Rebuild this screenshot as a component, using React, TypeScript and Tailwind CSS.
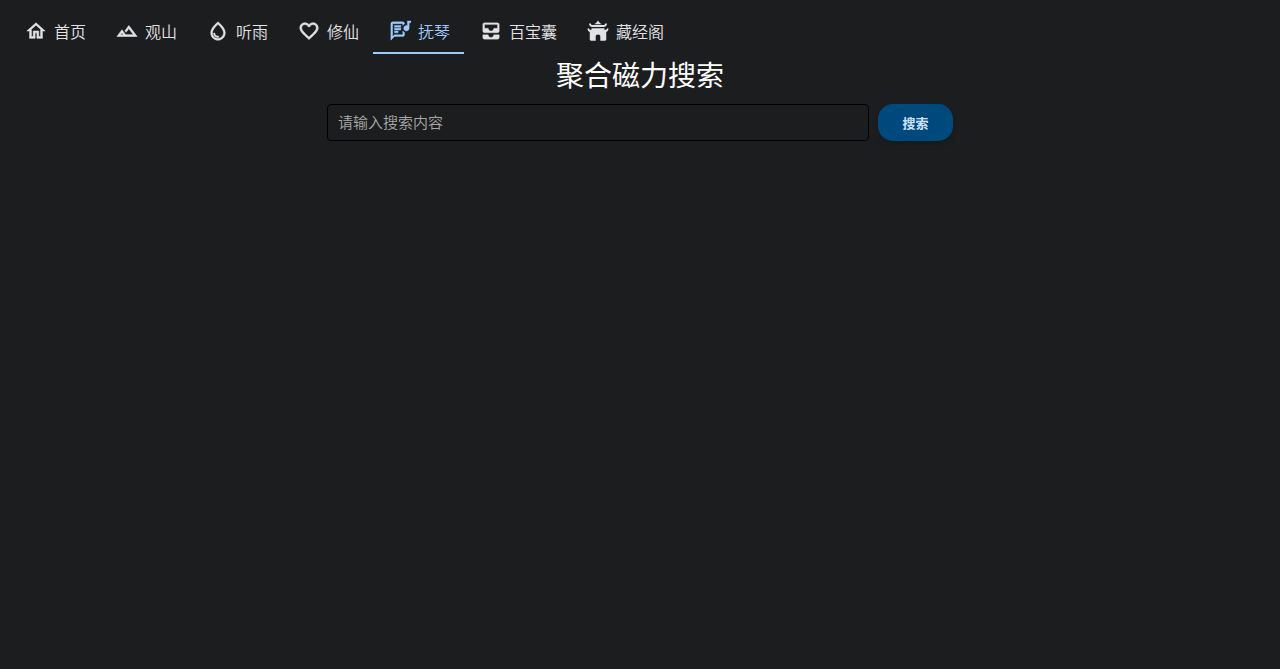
import { useState } from 'react';
import type { ReactNode } from 'react';
import { MdOutlineHome, MdOutlineWaterDrop, MdFavoriteBorder, MdOutlineLyrics, MdAllInbox } from 'react-icons/md';

type NavItem = {
  label: string;
  icon: ReactNode;
};

function MountainIcon() {
  return (
    <svg viewBox="0 0 24 24" fill="currentColor" stroke="currentColor" strokeWidth="0.6" aria-hidden="true">
      <path d="m14 6-4.22 5.63 1.25 1.67L14 9.33 19 16h-8.46l-4.01-5.37L1 18h22zM5 16l1.52-2.03L8.04 16z" />
    </svg>
  );
}

function TempleIcon() {
  return (
    <svg viewBox="0 0 24 24" fill="currentColor" aria-hidden="true">
      <path d="M12 .5c.8 1.7 2.200 3 4.200 4H7.800c2-1 3.400-2.300 4.200-4z" />
      <path d="M3.800 3.600c.3 1.300 1.100 1.900 2.500 1.900h11.400c1.400 0 2.200-.6 2.500-1.900l1.700.5c-.3 2.200-1.700 3.600-3.900 3.600H6c-2.200 0-3.600-1.400-3.900-3.600z" />
      <path d="M5 9h14v1.700h1c1 0 1.600-.6 1.900-1.700l1.600.5c-.3 2-1.200 3.100-2.500 3.600v8.100c0 .8-.5 1.300-1.300 1.300h-5.200v-4.600c0-1.100-1.100-2-2.500-2s-2.500.9-2.500 2v4.600H4.300c-.8 0-1.300-.5-1.300-1.300v-8.100C1.700 12.600.8 11.500.5 9.500L2.100 9c.3 1.100.9 1.700 1.900 1.700h1z" />
    </svg>
  );
}

const navItems: NavItem[] = [
  { label: '首页', icon: <MdOutlineHome strokeWidth={0.6} /> },
  { label: '观山', icon: <MountainIcon /> },
  { label: '听雨', icon: <MdOutlineWaterDrop strokeWidth={0.5} /> },
  { label: '修仙', icon: <MdFavoriteBorder strokeWidth={0.7} /> },
  { label: '抚琴', icon: <MdOutlineLyrics strokeWidth={0.4} /> },
  { label: '百宝囊', icon: <MdAllInbox strokeWidth={0.3} /> },
  { label: '藏经阁', icon: <TempleIcon /> },
];

function NavBar() {
  const [active, setActive] = useState('抚琴');

  return (
    <nav className="flex px-[9px] pt-[9px]">
      {navItems.map(({ label, icon }) => (
        <button
          key={label}
          type="button"
          onClick={() => setActive(label)}
          aria-current={active === label ? 'page' : undefined}
          className={`flex h-[45px] items-center gap-[7px] border-b-2 pr-[14px] pl-4 text-base font-[350] ${
            active === label ? 'border-[#9fcaff] text-[#9fcaff]' : 'border-transparent text-[#e3e2e6]'
          }`}
        >
          {/* the md icons carry an empty 24x24 path that must stay unstroked */}
          <span className="[&_path[fill=none]]:stroke-none [&>svg]:size-[22px]">{icon}</span>
          <span>{label}</span>
        </button>
      ))}
    </nav>
  );
}

function SearchForm() {
  const [keyword, setKeyword] = useState('');

  return (
    <form
      onSubmit={e => e.preventDefault()}
      className="mx-auto mt-[10px] flex w-1/2 gap-[9px] px-[7px]"
    >
      <input
        type="text"
        aria-label="搜索内容"
        placeholder="请输入搜索内容"
        value={keyword}
        onChange={e => setKeyword(e.target.value)}
        className="h-[37px] min-w-0 flex-1 rounded border border-black bg-transparent px-[10px] pb-[2px] text-[15px] font-[350] text-[#e3e2e6] outline-none placeholder:text-[#a8a8a8] focus:border-[#9fcaff]"
      />
      <button
        type="submit"
        className="h-[37px] w-[75px] rounded-[15px] bg-[#00497d] text-[13px] font-bold text-[#d1e4ff] shadow-md"
      >
        搜索
      </button>
    </form>
  );
}

export default function App() {
  return (
    <div className="min-h-screen bg-[#1c1d1e] font-['Noto_Sans_CJK_SC',sans-serif] text-white">
      <NavBar />
      <main>
        <h1 className="text-center text-[28px] leading-10">聚合磁力搜索</h1>
        <SearchForm />
      </main>
    </div>
  );
}
